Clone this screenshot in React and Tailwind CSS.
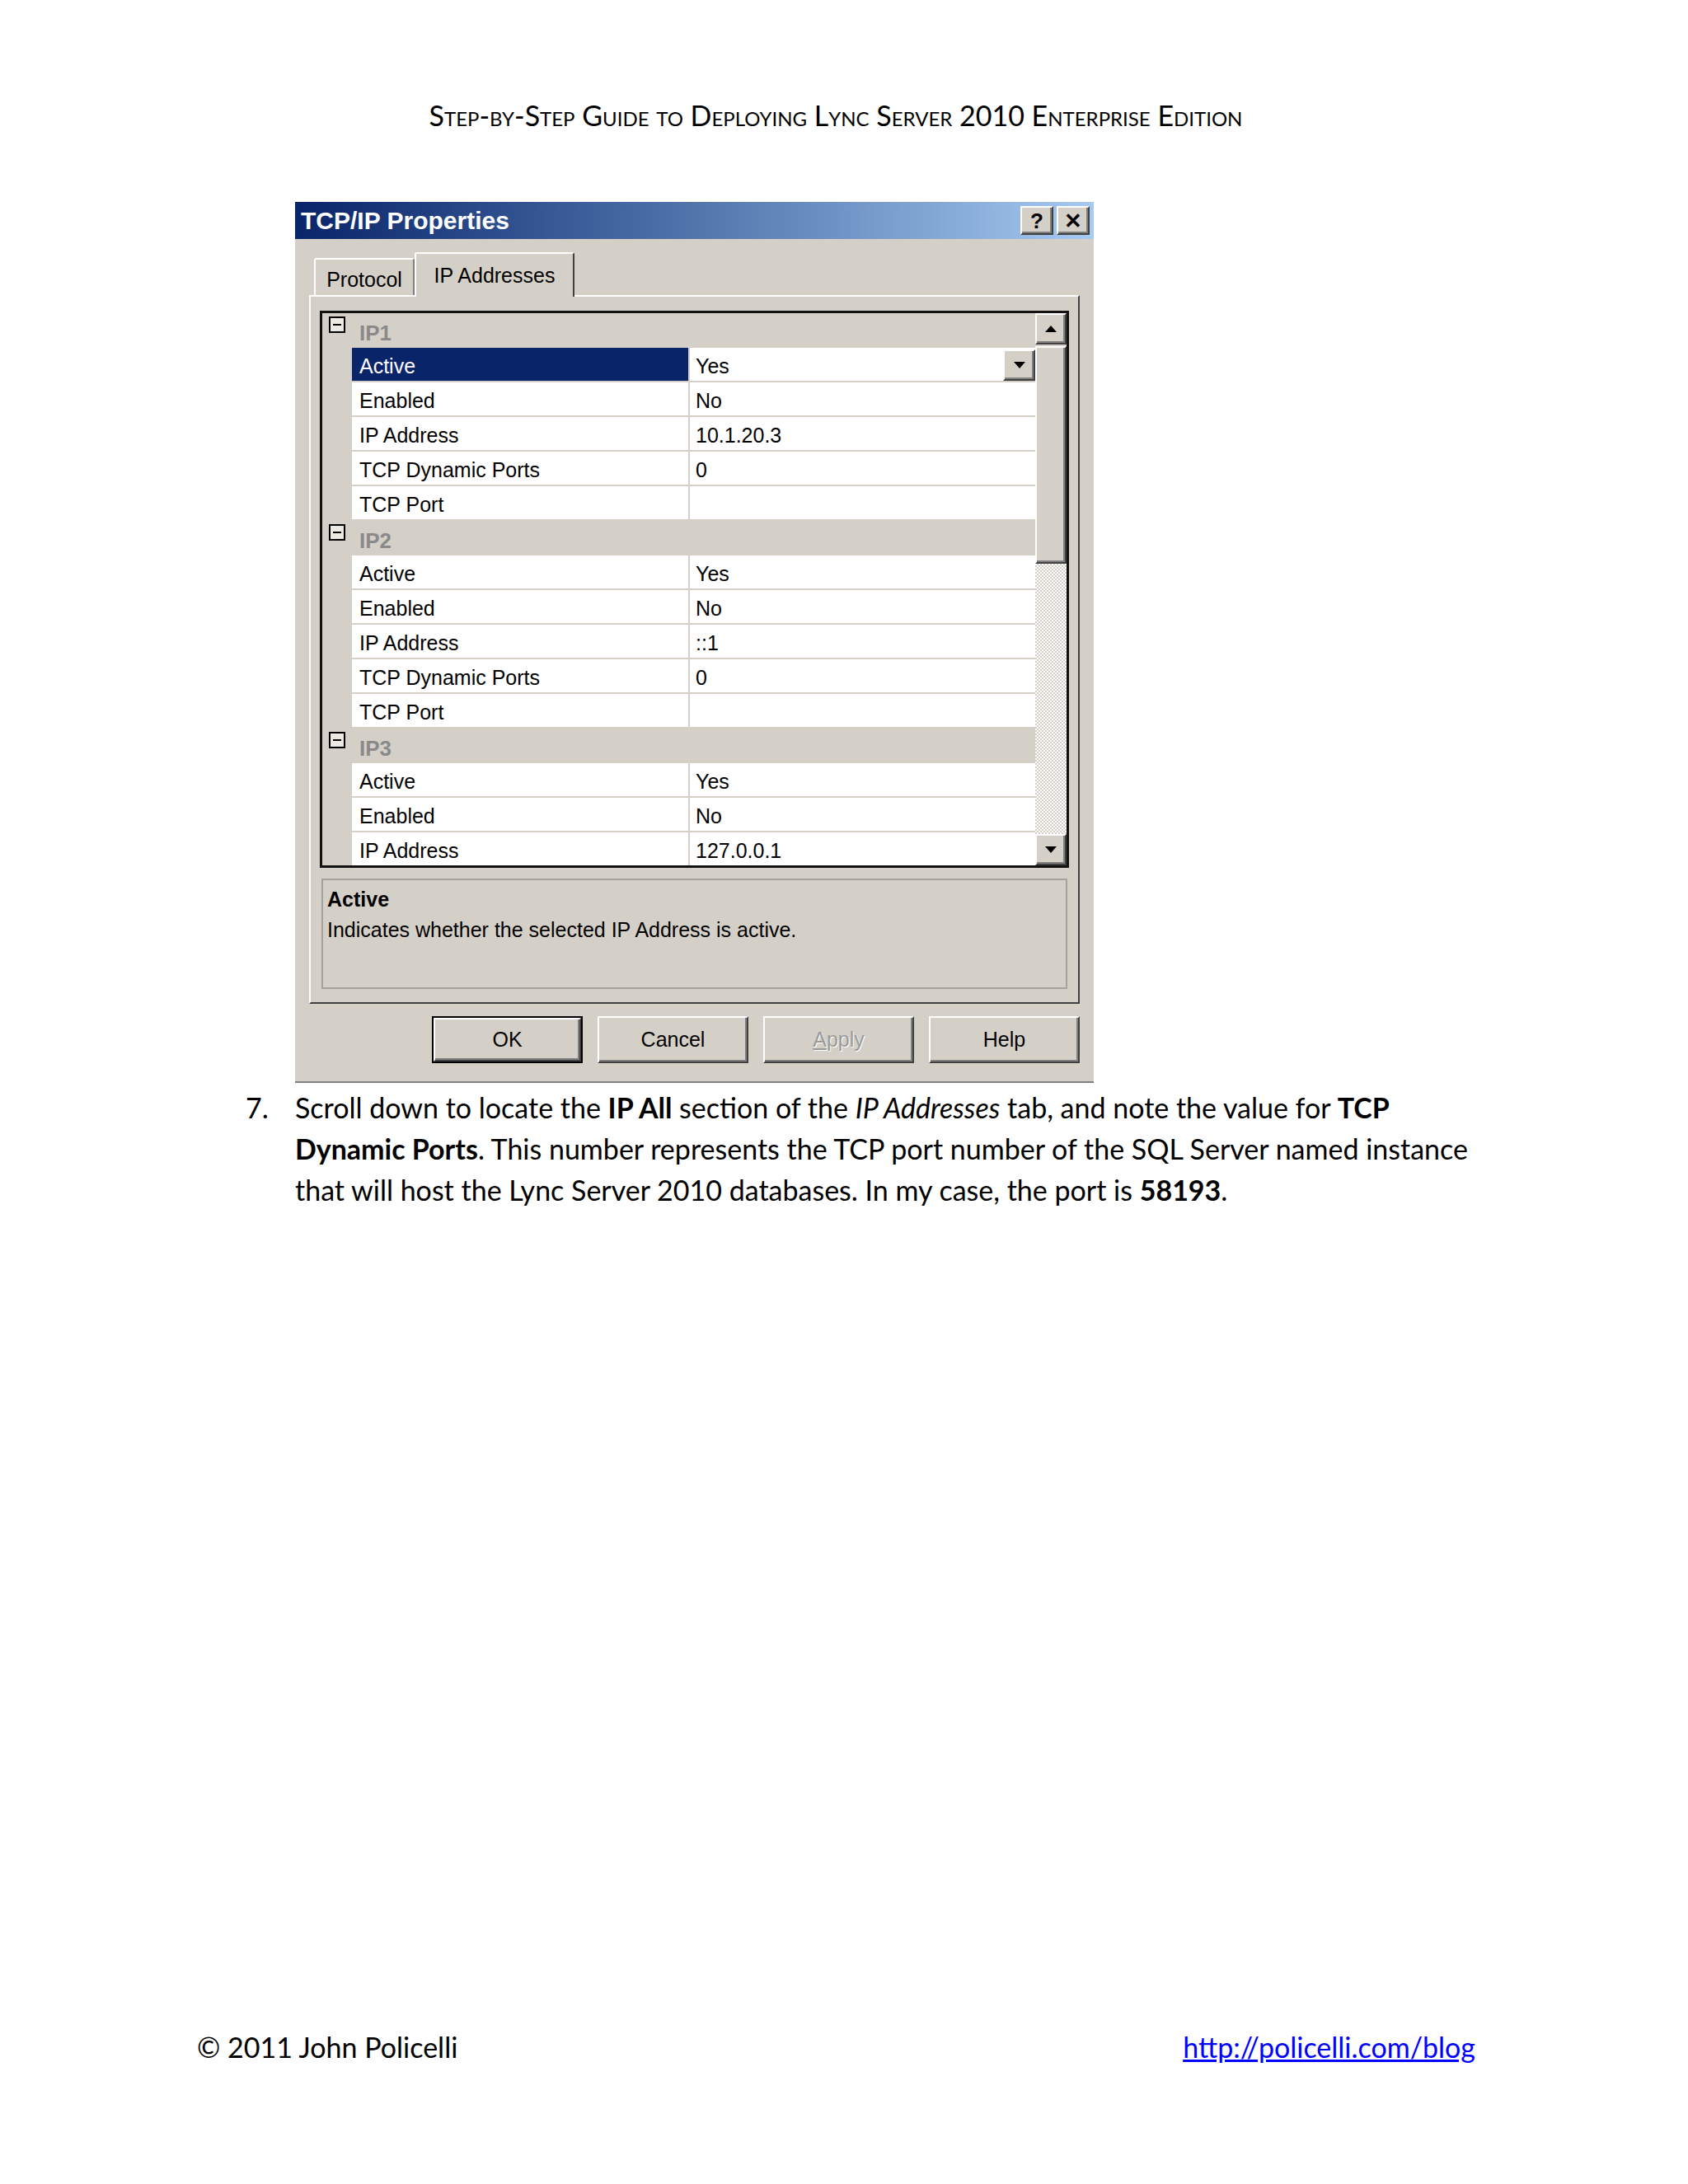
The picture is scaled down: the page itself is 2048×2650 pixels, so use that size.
const groups = [
  {
    name: 'IP1',
    rows: [
      ['Active', 'Yes'],
      ['Enabled', 'No'],
      ['IP Address', '10.1.20.3'],
      ['TCP Dynamic Ports', '0'],
      ['TCP Port', ''],
    ],
  },
  {
    name: 'IP2',
    rows: [
      ['Active', 'Yes'],
      ['Enabled', 'No'],
      ['IP Address', '::1'],
      ['TCP Dynamic Ports', '0'],
      ['TCP Port', ''],
    ],
  },
  {
    name: 'IP3',
    rows: [
      ['Active', 'Yes'],
      ['Enabled', 'No'],
      ['IP Address', '127.0.0.1'],
    ],
  },
];

const raised =
  'border-2 border-t-white border-l-white border-r-[#404040] border-b-[#404040] shadow-[inset_-2px_-2px_0_#808080] bg-[#d4d0c8]';

function Arrow({ up }) {
  return (
    <svg width="14" height="8" viewBox="0 0 14 8" aria-hidden="true">
      {up ? <polygon points="7,0 14,8 0,8" fill="#000" /> : <polygon points="0,0 14,0 7,8" fill="#000" />}
    </svg>
  );
}

function MinusBox() {
  return (
    <span className="w-[20px] h-[20px] border-2 border-black bg-[#ece9e2] grid place-items-center">
      <span className="w-[10px] h-[2px] bg-black" />
    </span>
  );
}

function CategoryRow({ name }) {
  return (
    <div className="flex h-[42px] shrink-0 bg-[#d4d0c8]">
      <div className="w-[36px] flex justify-center pt-[4px]">
        <MinusBox />
      </div>
      <div className="flex-1 pl-[9px] pt-[6px] flex items-center font-bold text-[26px] text-[#8a8a8a]">{name}</div>
    </div>
  );
}

function PropRow({ label, value, selected }) {
  return (
    <div className="flex h-[42px] shrink-0">
      <div className="w-[36px] bg-[#d4d0c8]" />
      <div
        className={
          selected
            ? 'w-[410px] border-b-2 border-r-2 border-[#d4d0c8] bg-[#0a246a] text-white pl-[9px] pt-[5px] flex items-center'
            : 'w-[410px] border-b-2 border-r-2 border-[#d4d0c8] bg-white pl-[9px] pt-[5px] flex items-center'
        }
      >
        {label}
      </div>
      <div className="flex-1 border-b-2 border-[#d4d0c8] bg-white pl-[7px] flex items-center">
        <span className="flex-1 pt-[5px]">{value}</span>
        {selected && (
          <span className={`${raised} w-[39px] h-[38px] grid place-items-center self-start mt-[2px]`}>
            <Arrow />
          </span>
        )}
      </div>
    </div>
  );
}

function PropertyGrid() {
  return (
    <div className="h-[676px] border-[3px] border-[#111] flex bg-[#d4d0c8]">
      <div className="flex-1 flex flex-col overflow-hidden">
        {groups.map((g, gi) => (
          <div key={g.name} className="flex flex-col">
            <CategoryRow name={g.name} />
            {g.rows.map(([l, v], ri) => (
              <PropRow key={l} label={l} value={v} selected={gi === 0 && ri === 0} />
            ))}
          </div>
        ))}
      </div>
      <div className="w-[38px] flex flex-col">
        <div className={`${raised} h-[38px] grid place-items-center`}>
          <Arrow up />
        </div>
        <div className={`${raised} h-[264px] mt-[2px]`} />
        <div className="flex-1 bg-[image:repeating-conic-gradient(#d4d0c8_0%_25%,#ffffff_0%_50%)] bg-[length:4px_4px]" />
        <div className={`${raised} h-[38px] grid place-items-center`}>
          <Arrow />
        </div>
      </div>
    </div>
  );
}

function Button({ children, isDefault, disabled }) {
  return (
    <div className={isDefault ? 'border-2 border-black' : ''}>
      <div
        className={`${raised} ${isDefault ? 'w-[179px] h-[53px]' : 'w-[183px] h-[57px]'} grid place-items-center ${
          disabled ? 'text-[#9a9a9a] [text-shadow:1px_1px_0_#fff]' : 'text-black'
        }`}
      >
        {children}
      </div>
    </div>
  );
}

function Dialog() {
  return (
    <div
      className="ml-[358px] mt-[83px] w-[969px] bg-[#d4d0c8] border-b-2 border-[#808080] flex flex-col text-[25px] text-black"
      style={{ fontFamily: '"Liberation Sans", Arial, sans-serif' }}
    >
      <div className="h-[45px] bg-linear-to-r from-[#0a246a] to-[#a6caf0] flex items-center pl-[7px] pr-[5px]">
        <span className="flex-1 text-white font-bold text-[30px]">TCP/IP Properties</span>
        <span className={`${raised} w-[40px] h-[35px] grid place-items-center font-bold text-[26px] leading-none`}>?</span>
        <span className={`${raised} w-[40px] h-[35px] ml-[4px] grid place-items-center font-bold text-[26px] leading-none`}>✕</span>
      </div>

      <div className="mt-[16px] pl-[23px] flex items-end h-[52px]">
        <div className="h-[45px] w-[122px] border-2 border-b-0 border-t-white border-l-white border-r-[#808080] rounded-t-[3px] flex items-center justify-center pt-[6px]">
          Protocol
        </div>
        <div className="h-[54px] w-[194px] -mb-[2px] relative z-10 bg-[#d4d0c8] border-2 border-b-0 border-t-white border-l-white border-r-[#404040] rounded-t-[3px] flex items-center justify-center pt-[2px]">
          IP Addresses
        </div>
      </div>

      <div className="mx-[17px] h-[860px] border-2 border-t-white border-l-white border-r-[#404040] border-b-[#404040] px-[11px] pt-[17px] flex flex-col">
        <PropertyGrid />
        <div className="mt-[13px] h-[134px] mx-[2px] border-2 border-[#a5a29c] px-[5px] pt-[6px] flex flex-col">
          <span className="font-bold leading-[34px]">Active</span>
          <span className="leading-[40px]">Indicates whether the selected IP Address is active.</span>
        </div>
      </div>

      <div className="mt-[15px] mb-[22px] pr-[17px] flex justify-end gap-[18px]">
        <Button isDefault>OK</Button>
        <Button>Cancel</Button>
        <Button disabled>
          <span>
            <span className="underline">A</span>pply
          </span>
        </Button>
        <Button>Help</Button>
      </div>
    </div>
  );
}

export default function App() {
  return (
    <div
      className="w-[2048px] h-[2650px] bg-white flex flex-col text-black"
      style={{ fontFamily: 'Lato, "Open Sans", sans-serif' }}
    >
      <div className="pt-[118px] pr-[20px] text-center text-[34px] leading-[44px] [font-variant-caps:small-caps]">
        Step-by-Step Guide to Deploying Lync Server 2010 Enterprise Edition
      </div>

      <Dialog />

      <div className="mt-[5px] pl-[298px] flex text-[34px] leading-[50px]">
        <span className="w-[60px] shrink-0">7.</span>
        <p>
          Scroll down to locate the <b>IP All</b> section of the <i>IP Addresses</i> tab, and note the value for <b>TCP</b>
          <br />
          <b>Dynamic Ports</b>. This number represents the TCP port number of the SQL Server named instance
          <br />
          that will host the Lync Server 2010 databases. In my case, the port is <b>58193</b>.
        </p>
      </div>

      <div className="mt-auto pb-[141px] pl-[239px] pr-[258px] flex justify-between text-[34px] leading-[50px]">
        <span>© 2011 John Policelli</span>
        <a href="#" className="text-[#0000ff] underline">
          http://policelli.com/blog
        </a>
      </div>
    </div>
  );
}
